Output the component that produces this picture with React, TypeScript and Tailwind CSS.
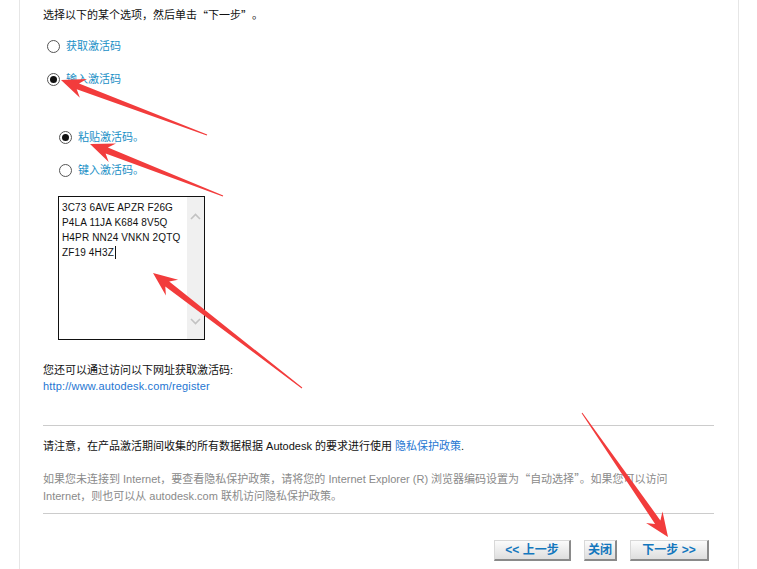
import React from "react";

const FONT = { fontFamily: '"Liberation Sans", Arial, "Noto Sans CJK SC", sans-serif' };
const CJK = { fontFamily: '"Noto Sans CJK SC", sans-serif' };

function Radio({ checked }: { checked?: boolean }) {
  return (
    <span className="w-[13px] h-[13px] rounded-full border border-[#555] bg-white flex items-center justify-center shrink-0">
      {checked && <span className="w-[7px] h-[7px] rounded-full bg-[#111]" />}
    </span>
  );
}

function arrowPoints(tx: number, ty: number, hx: number, hy: number) {
  const dx = hx - tx;
  const dy = hy - ty;
  const len = Math.hypot(dx, dy);
  const ux = dx / len;
  const uy = dy / len;
  const nx = -uy;
  const ny = ux;
  const headLen = 24;
  const headW = 10;
  const neckBack = 18;
  const shaftW = 3.2;
  const tailW = 0.5;
  const bx = hx - ux * headLen;
  const by = hy - uy * headLen;
  const kx = hx - ux * neckBack;
  const ky = hy - uy * neckBack;
  const p = [
    [tx + nx * tailW, ty + ny * tailW],
    [kx + nx * shaftW, ky + ny * shaftW],
    [bx + nx * headW, by + ny * headW],
    [hx, hy],
    [bx - nx * headW, by - ny * headW],
    [kx - nx * shaftW, ky - ny * shaftW],
    [tx - nx * tailW, ty - ny * tailW],
  ];
  return p.map((q) => q[0].toFixed(1) + "," + q[1].toFixed(1)).join(" ");
}

function Button({ children, w }: { children: React.ReactNode; w: string }) {
  return (
    <div
      className={`${w} h-[21px] flex items-center justify-center border-t border-l border-t-[#d8d8d8] border-l-[#d8d8d8] border-r-2 border-b-2 border-r-[#8a8a8a] border-b-[#8a8a8a] bg-gradient-to-b from-[#fbfbfb] to-[#dedede] text-[12px] font-bold text-[#1477bd]`}
    >
      {children}
    </div>
  );
}

export default function App() {
  const arrows: [number, number, number, number][] = [
    [207, 135, 61, 80],
    [223, 196, 90, 144],
    [302, 388, 153, 273],
    [582, 413, 668, 537],
  ];
  return (
    <div className="relative w-[757px] h-[569px] bg-white overflow-hidden text-[11px] text-[#111]" style={FONT}>
      <div className="ml-[19px] w-[720px] h-full border-l border-r border-[#e6e6e6] pl-[23px] pr-[24px] flex flex-col">
        <div className="h-[30px] flex items-center">
          选择以下的某个选项，然后单击<span style={CJK}>“</span>下一步<span style={CJK}>”</span>。
        </div>

        <div className="mt-[6px] h-[20px] flex items-center gap-[6px] pl-[4px]">
          <Radio />
          <span className="text-[#1a8fc6]">获取激活码</span>
        </div>
        <div className="mt-[13px] h-[20px] flex items-center gap-[6px] pl-[4px]">
          <Radio checked />
          <span className="text-[#1a8fc6]">输入激活码</span>
        </div>

        <div className="mt-[38px] h-[20px] flex items-center gap-[6px] pl-[16px]">
          <Radio checked />
          <span className="text-[#1a8fc6]">粘贴激活码。</span>
        </div>
        <div className="mt-[13px] h-[20px] flex items-center gap-[6px] pl-[16px]">
          <Radio />
          <span className="text-[#1a8fc6]">键入激活码。</span>
        </div>

        <div className="mt-[16px] ml-[15px] w-[147px] h-[144px] border border-[#111] flex">
          <div className="flex-1 min-w-0 pl-[3px] pt-[3px] leading-[15px] text-[10px] tracking-[0.15px] text-[#111] whitespace-nowrap">
            <div>3C73 6AVE APZR F26G</div>
            <div>P4LA 11JA K684 8V5Q</div>
            <div>H4PR NN24 VNKN 2QTQ</div>
            <div className="flex items-center">
              ZF19 4H3Z<span className="inline-block w-px h-[13px] bg-[#111] ml-[1px]" />
            </div>
          </div>
          <div className="w-[17px] h-full bg-[#f0f0f0] flex flex-col items-center justify-between pt-[16px] pb-[14px] shrink-0">
            <svg width="11" height="7" viewBox="0 0 11 7">
              <path d="M1 6 L5.5 1.5 L10 6" fill="none" stroke="#c2c2c2" strokeWidth="1.6" />
            </svg>
            <svg width="11" height="7" viewBox="0 0 11 7">
              <path d="M1 1 L5.5 5.5 L10 1" fill="none" stroke="#c2c2c2" strokeWidth="1.6" />
            </svg>
          </div>
        </div>

        <div className="mt-[22px] h-[16px] flex items-center">您还可以通过访问以下网址获取激活码:</div>
        <div className="h-[16px] flex items-center text-[#2576d2] tracking-[0.15px]">http://www.autodesk.com/register</div>

        <div className="mt-[31px] border-t border-[#cccccc]" />

        <div className="mt-[12px] h-[16px] flex items-center">
          请注意，在产品激活期间收集的所有数据根据 Autodesk 的要求进行使用&nbsp;<span className="text-[#2576d2]">隐私保护政策</span>.
        </div>

        <div className="mt-[16px] leading-[17px] text-[#8a8a8a]">
          <div>
            如果您未连接到 Internet，要查看隐私保护政策，请将您的 Internet Explorer (R) 浏览器编码设置为<span style={CJK}>“</span>自动选择<span style={CJK}>”</span>。如果您可以访问
          </div>
          <div>Internet，则也可以从 autodesk.com 联机访问隐私保护政策。</div>
        </div>

        <div className="mt-[8px] border-t border-[#cccccc]" />

        <div className="mt-[26px] flex justify-end gap-[13px] pr-[5px]">
          <Button w="w-[77px]">&lt;&lt; 上一步</Button>
          <Button w="w-[33px]">关闭</Button>
          <Button w="w-[79px]">下一步 &gt;&gt;</Button>
        </div>
      </div>

      <svg className="absolute inset-0 pointer-events-none" width="757" height="569">
        {arrows.map((a, i) => (
          <polygon key={i} points={arrowPoints(a[0], a[1], a[2], a[3])} fill="#f23c3c" />
        ))}
      </svg>
    </div>
  );
}
